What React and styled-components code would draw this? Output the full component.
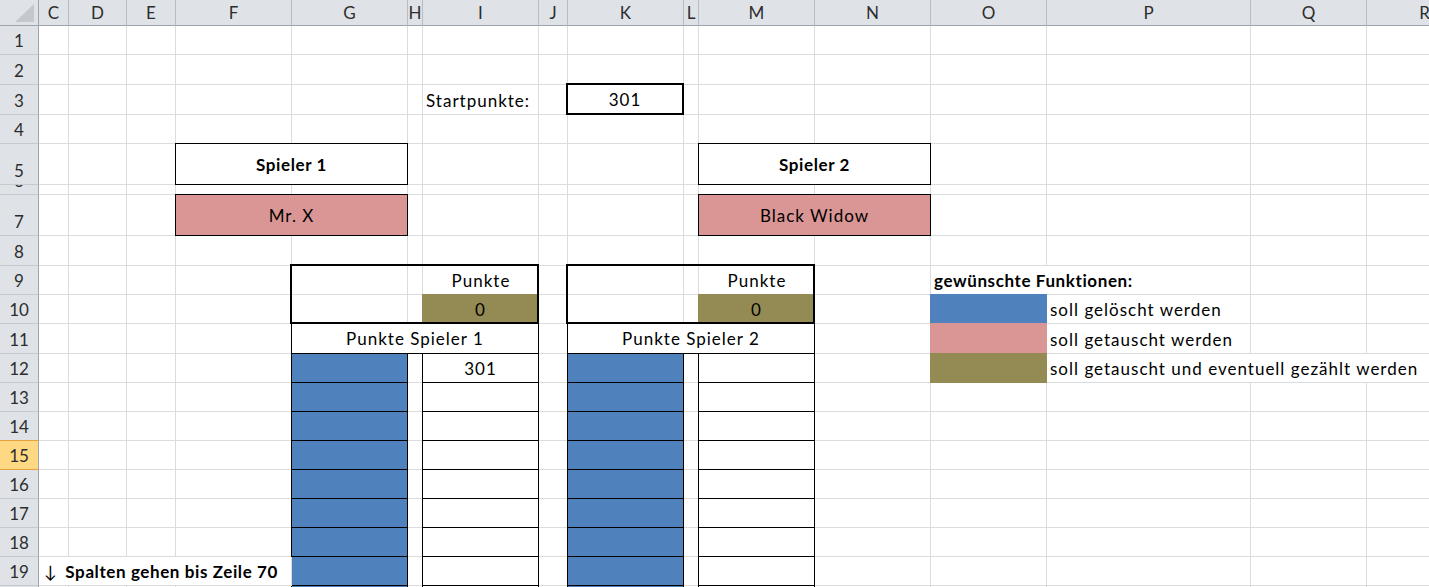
import React from 'react';
import styled, { createGlobalStyle, css } from 'styled-components';

const COLS = [
  ['C', 30], ['D', 58], ['E', 49], ['F', 116], ['G', 116], ['H', 15], ['I', 116], ['J', 29],
  ['K', 116], ['L', 15], ['M', 116], ['N', 116], ['O', 116], ['P', 204], ['Q', 116], ['R', 116],
];
const ROWS = [29, 30, 30, 29, 41, 10, 41, 30, 29, 29, 30, 29, 29, 29, 29, 29, 29, 29, 29, 29, 29];

const BLUE = '#4f81bd';
const PINK = '#da9694';
const OLIVE = '#948a54';
const GRID = '#dadcdd';

const colIdx = (l) => COLS.findIndex((c) => c[0] === l) + 2;

// turns "G9:I10" into grid placement props
const place = (ref) => {
  const [a, b = a] = ref.split(':');
  const parse = (s) => [s.match(/[A-Z]+/)[0], +s.match(/\d+/)[0]];
  const [c1, r1] = parse(a);
  const [c2, r2] = parse(b);
  return { $col: `${colIdx(c1)} / ${colIdx(c2) + 1}`, $row: `${r1 + 1} / ${r2 + 2}` };
};

const GlobalStyle = createGlobalStyle`
  html, body {
    margin: 0;
    padding: 0;
    overflow: hidden;
    background: #fff;
  }
  body {
    font-family: 'Lato', 'DejaVu Sans', sans-serif;
  }
`;

const placed = css`
  grid-column: ${(p) => p.$col};
  grid-row: ${(p) => p.$row};
`;

const Viewport = styled.div`
  width: 100vw;
  height: 100vh;
  overflow: hidden;
`;

const Sheet = styled.div`
  display: grid;
  grid-template-columns: 39px ${COLS.map((c) => `${c[1]}px`).join(' ')};
  grid-template-rows: 26px ${ROWS.map((h) => `${h}px`).join(' ')};
  width: max-content;
  font-size: 17px;
  letter-spacing: 1px;
  color: #000;
`;

const Corner = styled.div`
  grid-column: 1;
  grid-row: 1;
  position: relative;
  background: #dfe3e8;
  border-right: 1px solid #9ea4ab;
  border-bottom: 1px solid #9ea4ab;
  &::after {
    content: '';
    position: absolute;
    left: 15px;
    top: 4px;
    width: 19px;
    height: 18px;
    background: #c4c8cd;
    clip-path: polygon(100% 0, 100% 100%, 0 100%);
  }
`;

const ColHead = styled.div`
  ${placed}
  display: flex;
  align-items: center;
  justify-content: center;
  background: #dfe3e8;
  border-right: 1px solid #b8bdc3;
  border-bottom: 1px solid #9ea4ab;
  color: #2d2d2d;
  font-size: 17px;
  letter-spacing: 0;
  overflow: hidden;
`;

const RowHead = styled.div`
  ${placed}
  display: flex;
  align-items: flex-end;
  justify-content: center;
  padding-bottom: 3px;
  line-height: 20px;
  background: ${(p) => (p.$active ? '#ffd883' : '#dfe3e8')};
  border-right: 1px solid #9ea4ab;
  border-bottom: 1px solid ${(p) => (p.$active ? '#e2a33e' : '#c5c9ce')};
  box-shadow: ${(p) => (p.$active ? '0 -1px 0 #e2a33e' : 'none')};
  color: #2d2d2d;
  font-size: 17px;
  letter-spacing: 0;
  overflow: hidden;
`;

const GridCell = styled.div`
  ${placed}
  border-right: 1px solid ${GRID};
  border-bottom: 1px solid ${GRID};
`;

const Label = styled.div`
  ${placed}
  display: flex;
  align-items: center;
  justify-content: ${(p) => p.$align || 'flex-start'};
  padding: 0 3px;
  font-weight: ${(p) => (p.$bold ? 700 : 400)};
  letter-spacing: ${(p) => (p.$bold ? '0.6px' : 'inherit')};
  white-space: nowrap;
  ${(p) =>
    p.$cover &&
    css`
      background: #fff;
      border-right: 1px solid ${GRID};
      border-bottom: 1px solid ${GRID};
    `}
`;

const Arrow = styled.span`
  margin: 0 8px 0 2px;
  font-weight: 400;
`;

const Swatch = styled.div`
  ${placed}
  margin: -1px 0 0 -1px;
  display: flex;
  align-items: center;
  justify-content: center;
  padding-top: 1px;
  background: ${(p) => p.$fill};
`;

const Field = styled.div`
  ${placed}
  margin: -1px 0 0 -1px;
  display: flex;
  align-items: center;
  justify-content: center;
  border: 1px solid #000;
  background: ${(p) => p.$fill || '#fff'};
  font-weight: ${(p) => (p.$bold ? 700 : 400)};
  letter-spacing: ${(p) => (p.$bold ? '0.6px' : 'inherit')};
  white-space: nowrap;
`;

const Frame = styled.div`
  ${placed}
  margin: -2px 0 0 -2px;
  display: flex;
  align-items: center;
  justify-content: center;
  padding-top: 1px;
  border: 2px solid #000;
  background: ${(p) => p.$fill || 'transparent'};
`;

const SCORE_ROWS = [12, 13, 14, 15, 16, 17, 18, 19, 20, 21];

function PlayerTable({ left, right, title }) {
  return (
    <>
      <Label {...place(`${right}9`)} $align="center">Punkte</Label>
      <Swatch {...place(`${right}10`)} $fill={OLIVE}>0</Swatch>
      <Field {...place(`${left}11:${right}11`)}>{title}</Field>
      {SCORE_ROWS.map((r) => (
        <React.Fragment key={r}>
          <Field {...place(`${left}${r}`)} $fill={BLUE} />
          <Field {...place(`${right}${r}`)}>{left === 'G' && r === 12 ? '301' : ''}</Field>
        </React.Fragment>
      ))}
      <Frame {...place(`${left}9:${right}10`)} />
    </>
  );
}

export default function App() {
  return (
    <Viewport>
      <GlobalStyle />
      <Sheet>
        <Corner />
        {COLS.map(([l], i) => (
          <ColHead key={l} $col={i + 2} $row={1}>{l}</ColHead>
        ))}
        {ROWS.map((_, i) => (
          <RowHead key={i} $col={1} $row={i + 2} $active={i + 1 === 15}>{i + 1}</RowHead>
        ))}
        {ROWS.map((_, r) =>
          COLS.map(([l], c) => <GridCell key={`${l}${r}`} $col={c + 2} $row={r + 2} />)
        )}

        {/* Startpunkte */}
        <Label {...place('I3')}>Startpunkte:</Label>
        <Frame {...place('K3')} $fill="#fff">301</Frame>

        {/* Spielernamen */}
        <Field {...place('F5:G5')} $bold>Spieler 1</Field>
        <Field {...place('F7:G7')} $fill={PINK}>Mr. X</Field>
        <Field {...place('M5:N5')} $bold>Spieler 2</Field>
        <Field {...place('M7:N7')} $fill={PINK}>Black Widow</Field>

        {/* Punktetabellen */}
        <PlayerTable left="G" right="I" title="Punkte Spieler 1" />
        <PlayerTable left="K" right="M" title="Punkte Spieler 2" />

        {/* Legende */}
        <Label {...place('O9:P9')} $bold $cover>gewünschte Funktionen:</Label>
        <Swatch {...place('O10')} $fill={BLUE} />
        <Label {...place('P10')}>soll gelöscht werden</Label>
        <Swatch {...place('O11')} $fill={PINK} />
        <Label {...place('P11')}>soll getauscht werden</Label>
        <Swatch {...place('O12')} $fill={OLIVE} />
        <Label {...place('P12:R12')} $cover>soll getauscht und eventuell gezählt werden</Label>

        <Label {...place('C19:F19')} $bold $cover>
          <Arrow>↓</Arrow>Spalten gehen bis Zeile 70
        </Label>
      </Sheet>
    </Viewport>
  );
}
